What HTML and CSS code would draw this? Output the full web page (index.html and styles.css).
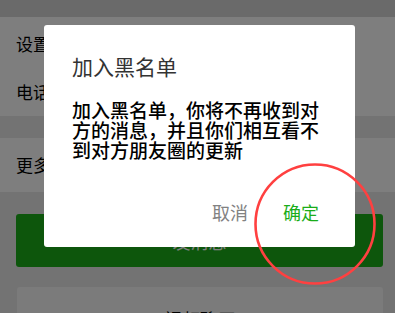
FILE: index.html
```html
<!DOCTYPE html>
<html lang="zh-CN">
<head>
  <meta charset="UTF-8" />
  <meta name="viewport" content="width=device-width, initial-scale=1.0" />
  <title>加入黑名单</title>
  <link rel="stylesheet" href="styles.css">
</head>
<body>
  <div class="topbar"></div>
  <div class="list">
    <div class="row row-first">设置备注和标签</div>
    <div class="row">电话号码</div>
  </div>
  <div class="list list-more">
    <div class="row row-more">更多信息</div>
  </div>
  <div class="actions">
    <button class="btn btn-green">发消息</button>
    <button class="btn btn-gray">视频聊天</button>
  </div>

  <div class="mask"></div>

  <div class="dialog">
    <h2 class="dialog-title">加入黑名单</h2>
    <p class="dialog-text">加入黑名单，你将不再收到对方的消息，并且你们相互看不到对方朋友圈的更新</p>
    <div class="dialog-footer">
      <span class="dialog-btn cancel">取消</span>
      <span class="dialog-btn ok">确定</span>
    </div>
  </div>

  <!-- 标注圈 -->
  <svg class="mark" width="128" height="128" viewBox="0 0 128 128">
    <circle cx="64" cy="64" r="59.5" fill="none" stroke="#ff4040" stroke-width="2.6" />
  </svg>
</body>
</html>
```

FILE: styles.css
```css
body { margin: 0; width: 395px; height: 313px; overflow: hidden; background: #e6e6e6; font-family: "Noto Sans CJK SC", "Noto Sans", sans-serif; position: relative; }
.topbar { height: 17px; background: #d4d4d4; }
.list { background: #fdfdfd; }
.row { padding-left: 16px; font-size: 17px; line-height: 48px; height: 48px; color: #000; }
.row-first { height: 51px; line-height: 53px; }
.list-more { margin-top: 22px; }
.row-more { height: 54px; line-height: 54px; }
.actions { display: flex; flex-direction: column; gap: 20px; padding: 22px 12px 0 16px; }
.btn { height: 53px; border: 0; border-radius: 3px; font-family: inherit; font-size: 18px; }
.btn-green { background: #1aad19; color: #fff; }
.btn-gray { background: #f6f6f6; color: #000; margin-left: 1px; padding-top: 12px; }
.mask { position: absolute; top: 0; left: 0; right: 0; bottom: 0; background: rgba(0, 0, 0, 0.5); }
.dialog { position: absolute; left: 44px; top: 25px; width: 311px; height: 222px; box-sizing: border-box; padding: 27px 28px 0; background: #fff; border-radius: 3px; }
.dialog-title { margin: 0; font-size: 21px; line-height: 28px; font-weight: normal; color: #333; }
.dialog-text { margin: 20px 0 0; font-size: 19px; line-height: 20px; font-weight: 500; color: #000; }
.dialog-footer { display: flex; justify-content: flex-end; gap: 35px; margin-top: 40px; padding-right: 8px; }
.dialog-btn { font-size: 18px; line-height: 24px; }
.cancel { color: #828282; }
.ok { color: #1aad19; }
.mark { position: absolute; left: 251px; top: 160px; }
```
